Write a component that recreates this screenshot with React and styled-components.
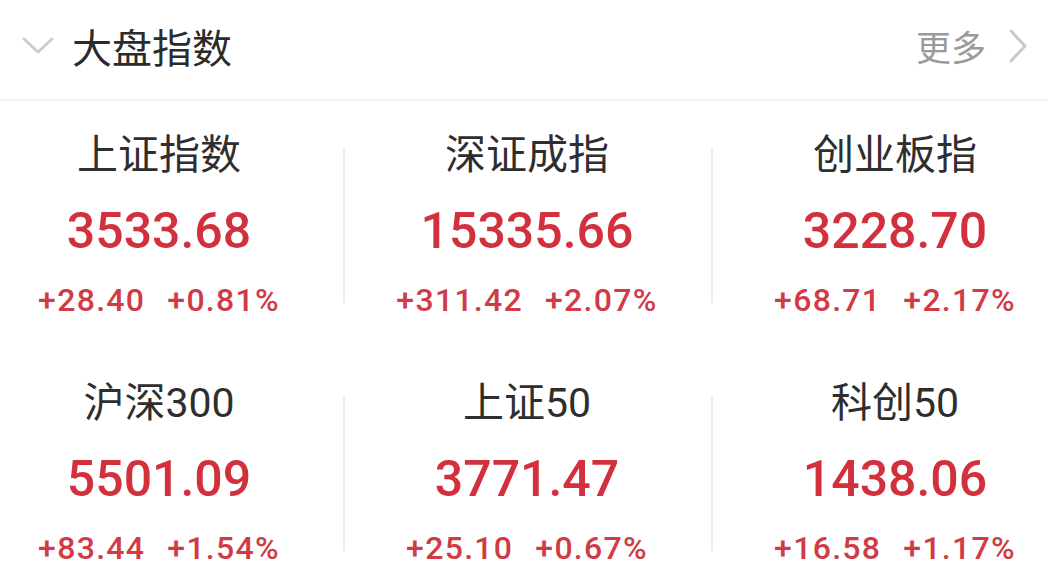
import React from "react";
import styled, { createGlobalStyle } from "styled-components";

const GlobalStyle = createGlobalStyle`
  html, body {
    margin: 0;
    padding: 0;
    background: #ffffff;
    overflow: hidden;
  }
  body {
    font-family: "Noto Sans CJK SC", "Noto Sans", sans-serif;
  }
`;

const Page = styled.div`
  width: 1048px;
  height: 576px;
  overflow: hidden;
  background: #ffffff;
`;

const Header = styled.div`
  height: 101px;
  display: flex;
  align-items: center;
  padding: 0 20px 8px 22px;
  box-sizing: border-box;
  border-bottom: 2px solid #f3f3f3;
`;

const Title = styled.h1`
  margin: 0 0 0 18px;
  font-size: 40px;
  font-weight: 400;
  color: #2b2b2b;
  flex: 1;
`;

const More = styled.div`
  display: flex;
  align-items: center;
  gap: 22px;
  color: #9a9a9a;
  font-size: 35px;
`;

const Grid = styled.div`
  width: 1104px;
  margin-left: -25px;
  display: grid;
  grid-template-columns: repeat(3, 368px);
  grid-auto-rows: 248px;
`;

const Cell = styled.div`
  position: relative;
  display: flex;
  flex-direction: column;
  align-items: center;
  padding-top: 29px;
  box-sizing: border-box;

  &::before {
    content: "";
    display: ${({ $divider }) => ($divider ? "block" : "none")};
    position: absolute;
    left: 0;
    top: 47px;
    width: 2px;
    height: 155px;
    background: #ececec;
  }
`;

const Name = styled.div`
  height: 50px;
  line-height: 50px;
  font-size: 41px;
  color: #2e2e2e;
  font-family: "Roboto", "Noto Sans CJK SC", sans-serif;
`;

const Value = styled.div`
  margin-top: 21px;
  height: 60px;
  line-height: 60px;
  font-family: "Roboto", sans-serif;
  font-weight: 500;
  font-size: 50px;
  color: #d2303c;
`;

const Change = styled.div`
  margin-top: 19px;
  height: 40px;
  line-height: 40px;
  display: flex;
  gap: 22px;
  font-family: "Roboto", sans-serif;
  font-weight: 500;
  font-size: 32px;
  letter-spacing: 1.3px;
  color: #d03b46;
`;

const indices = [
  { name: "上证指数", value: "3533.68", diff: "+28.40", pct: "+0.81%" },
  { name: "深证成指", value: "15335.66", diff: "+311.42", pct: "+2.07%" },
  { name: "创业板指", value: "3228.70", diff: "+68.71", pct: "+2.17%" },
  { name: "沪深300", value: "5501.09", diff: "+83.44", pct: "+1.54%" },
  { name: "上证50", value: "3771.47", diff: "+25.10", pct: "+0.67%" },
  { name: "科创50", value: "1438.06", diff: "+16.58", pct: "+1.17%" },
];

const ChevronDown = () => (
  <svg width="32" height="20" viewBox="0 0 32 20">
    <polyline points="2,3 16,16 30,3" fill="none" stroke="#cccccc" strokeWidth="3" strokeLinecap="round" strokeLinejoin="round" />
  </svg>
);

const ChevronRight = () => (
  <svg width="20" height="34" viewBox="0 0 20 34">
    <polyline points="3,2 17,17 3,32" fill="none" stroke="#c8c8c8" strokeWidth="3" strokeLinecap="round" strokeLinejoin="round" />
  </svg>
);

export default function App() {
  return (
    <Page>
      <GlobalStyle />
      <Header>
        <ChevronDown />
        <Title>大盘指数</Title>
        <More>
          <span>更多</span>
          <ChevronRight />
        </More>
      </Header>
      <Grid>
        {indices.map((item, i) => (
          <Cell key={item.name} $divider={i % 3 !== 0}>
            <Name>{item.name}</Name>
            <Value>{item.value}</Value>
            <Change>
              <span>{item.diff}</span>
              <span>{item.pct}</span>
            </Change>
          </Cell>
        ))}
      </Grid>
    </Page>
  );
}
